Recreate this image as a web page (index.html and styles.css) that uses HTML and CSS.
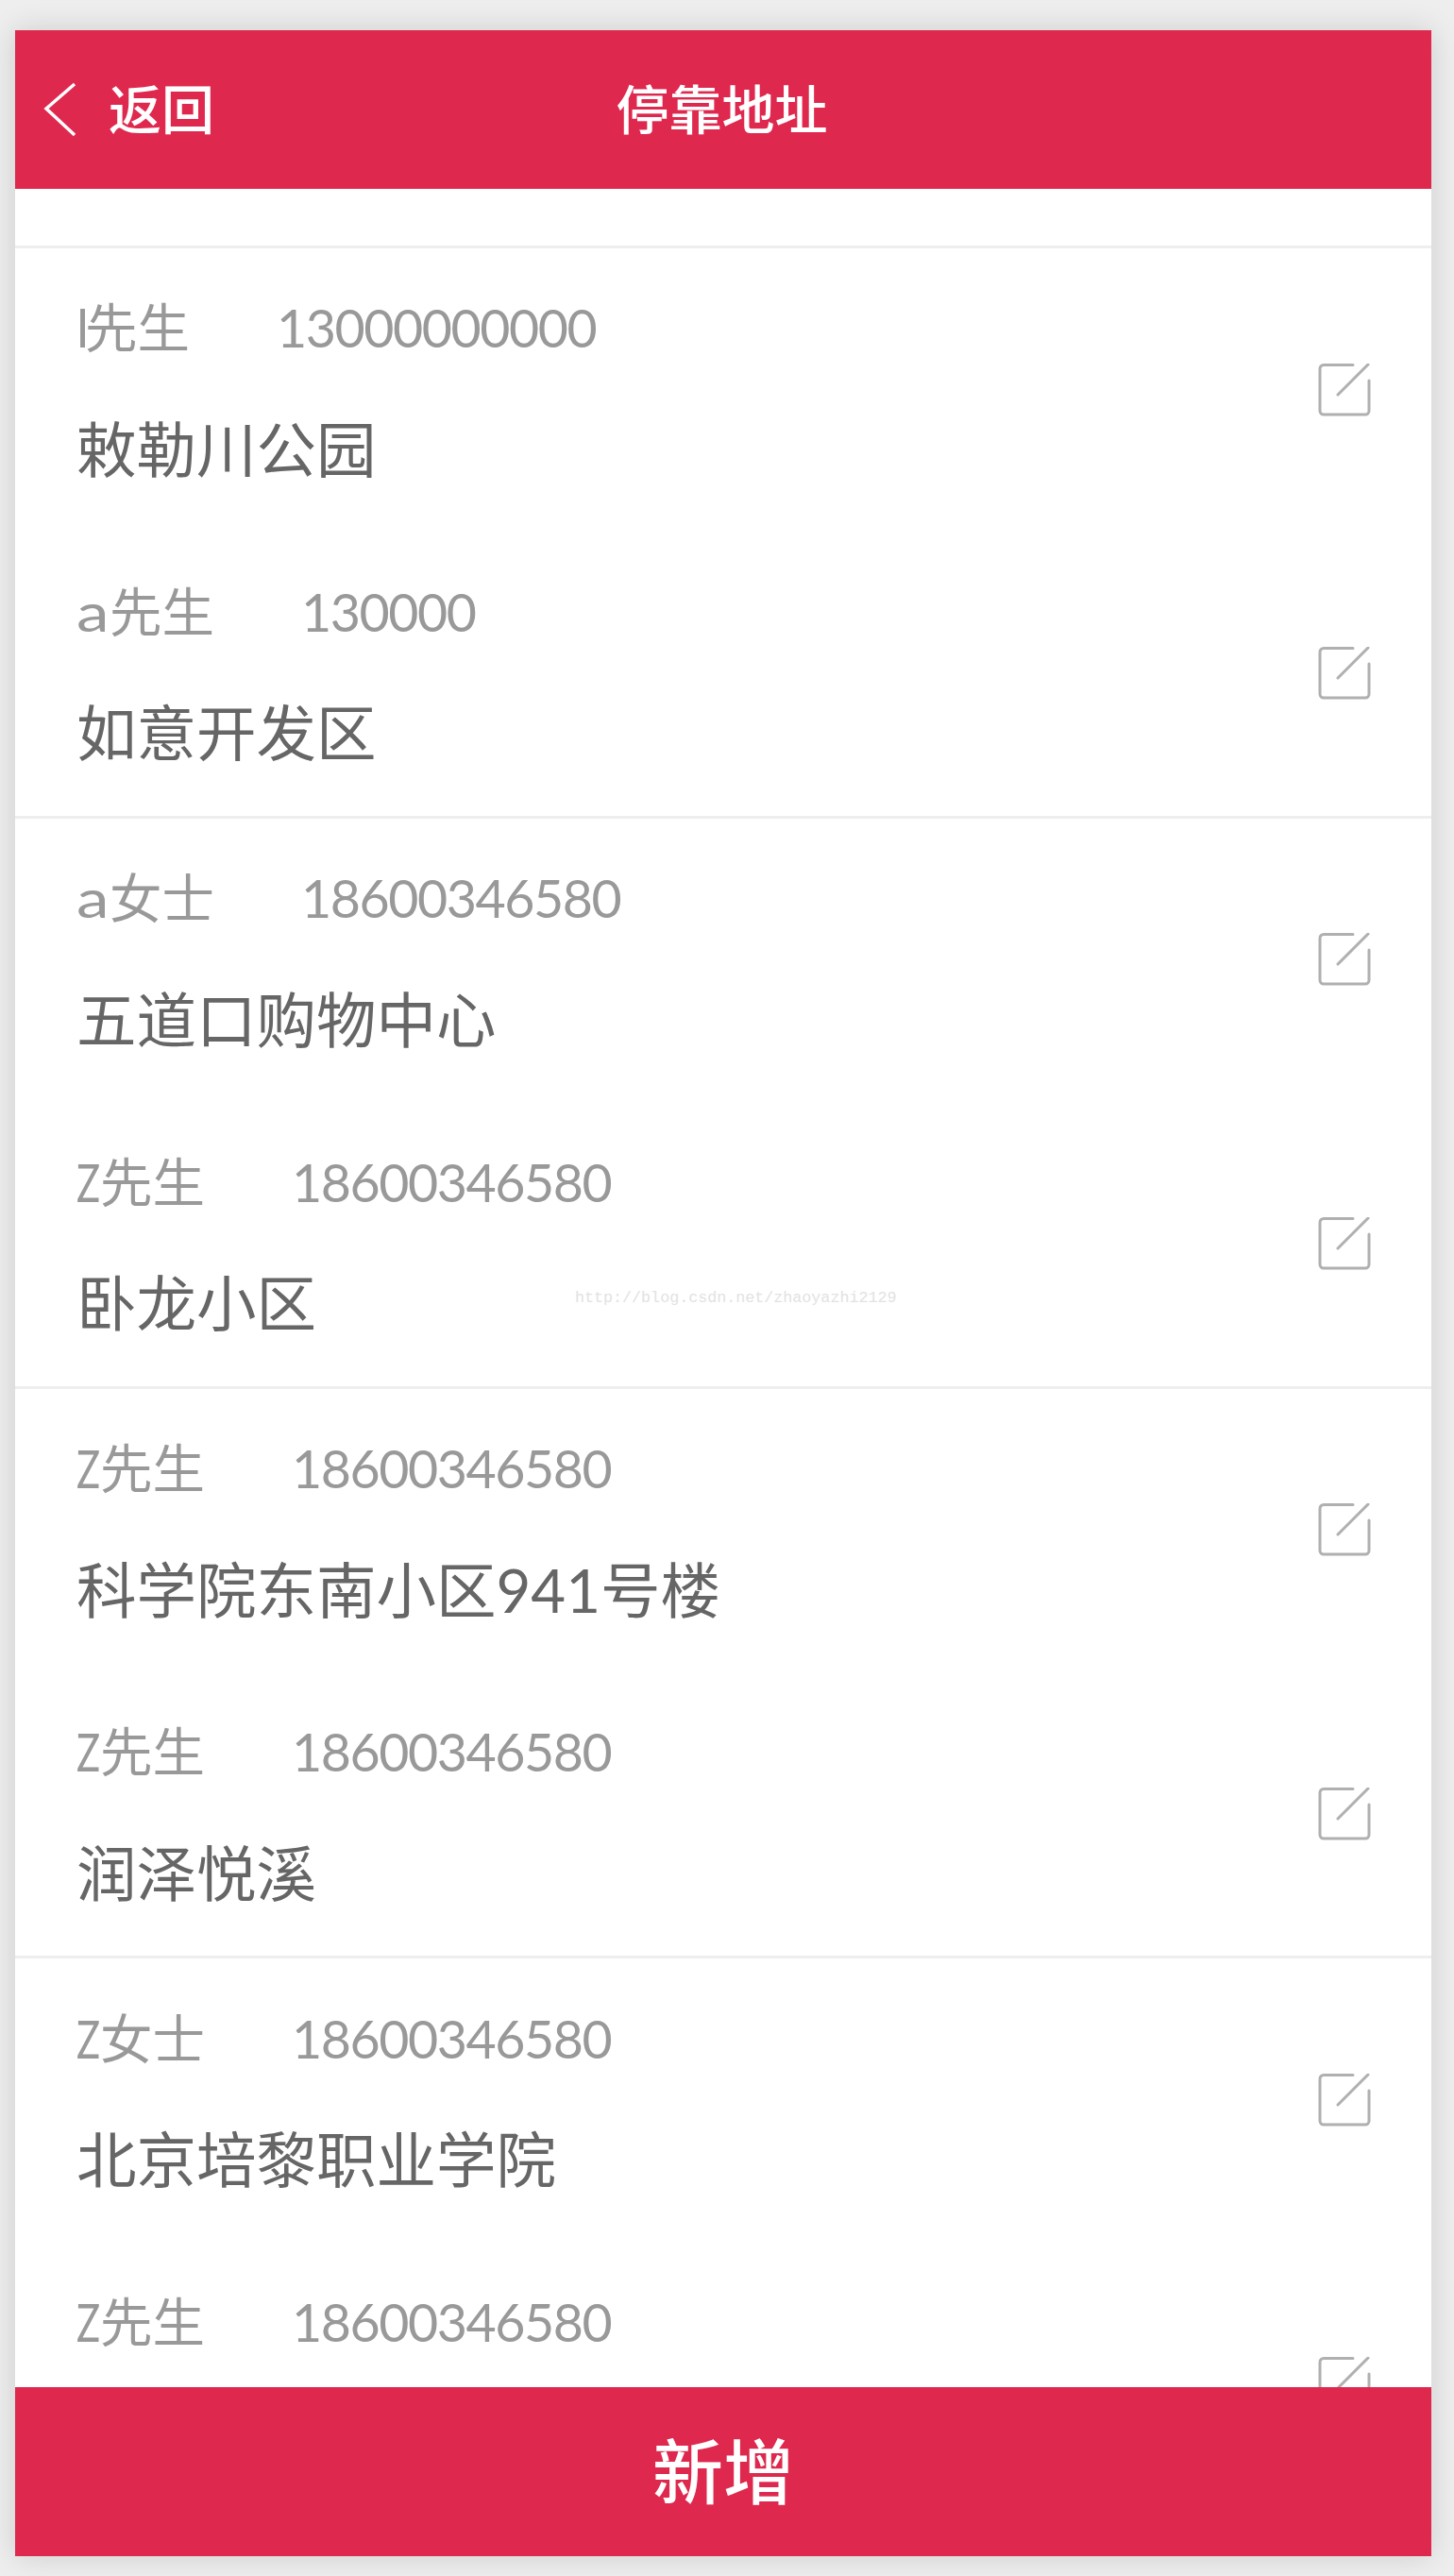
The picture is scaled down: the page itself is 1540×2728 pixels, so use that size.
FILE: index.html
```html
<!DOCTYPE html>
<html lang="zh-CN">
<head>
    <meta charset="UTF-8">
    <meta name="viewport" content="width=device-width, initial-scale=1.0">
    <title>停靠地址</title>
    <link rel="stylesheet" href="styles.css">
</head>
<body>
    <svg width="0" height="0" class="defs">
        <symbol id="edit" viewBox="0 0 56 56">
            <path d="M37 1.5H6A4 4 0 0 0 2 5.5V50A4 4 0 0 0 6 54H50A4 4 0 0 0 54 50V18" fill="none" stroke="currentColor" stroke-width="3" stroke-linecap="round"/>
            <path d="M21 33L53 1" fill="none" stroke="currentColor" stroke-width="3" stroke-linecap="round"/>
        </symbol>
    </svg>
    <div class="container">
        <header class="top">
            <a class="back">
                <svg width="36" height="58" viewBox="0 0 36 58"><path d="M33 2L3 28L33 56" fill="none" stroke="#fff" stroke-width="3.5"/></svg>
                <span>返回</span>
            </a>
            <h1>停靠地址</h1>
        </header>

        <div class="list">
            <section class="group">
                <div class="row">
                    <div class="info">
                        <p class="person"><span class="name"><i class="thin">l</i>先生</span><span class="phone">13000000000</span></p>
                        <p class="addr">敕勒川公园</p>
                    </div>
                    <svg class="edit"><use href="#edit"/></svg>
                </div>
                <div class="row">
                    <div class="info">
                        <p class="person"><span class="name"><i class="wide">a</i>先生</span><span class="phone">130000</span></p>
                        <p class="addr">如意开发区</p>
                    </div>
                    <svg class="edit"><use href="#edit"/></svg>
                </div>
            </section>
            <section class="group">
                <div class="row">
                    <div class="info">
                        <p class="person"><span class="name"><i class="wide">a</i>女士</span><span class="phone">18600346580</span></p>
                        <p class="addr">五道口购物中心</p>
                    </div>
                    <svg class="edit"><use href="#edit"/></svg>
                </div>
                <div class="row">
                    <div class="info">
                        <p class="person"><span class="name"><i class="narrow">Z</i>先生</span><span class="phone">18600346580</span></p>
                        <p class="addr">卧龙小区</p>
                    </div>
                    <svg class="edit"><use href="#edit"/></svg>
                </div>
            </section>
            <section class="group">
                <div class="row">
                    <div class="info">
                        <p class="person"><span class="name"><i class="narrow">Z</i>先生</span><span class="phone">18600346580</span></p>
                        <p class="addr">科学院东南小区941号楼</p>
                    </div>
                    <svg class="edit"><use href="#edit"/></svg>
                </div>
                <div class="row">
                    <div class="info">
                        <p class="person"><span class="name"><i class="narrow">Z</i>先生</span><span class="phone">18600346580</span></p>
                        <p class="addr">润泽悦溪</p>
                    </div>
                    <svg class="edit"><use href="#edit"/></svg>
                </div>
            </section>
            <section class="group">
                <div class="row">
                    <div class="info">
                        <p class="person"><span class="name"><i class="narrow">Z</i>女士</span><span class="phone">18600346580</span></p>
                        <p class="addr">北京培黎职业学院</p>
                    </div>
                    <svg class="edit"><use href="#edit"/></svg>
                </div>
                <div class="row">
                    <div class="info">
                        <p class="person"><span class="name"><i class="narrow">Z</i>先生</span><span class="phone">18600346580</span></p>
                        <p class="addr"></p>
                    </div>
                    <svg class="edit"><use href="#edit"/></svg>
                </div>
            </section>
            <div class="watermark">http://blog.csdn.net/zhaoyazhi2129</div>
        </div>

        <button type="button" class="add">新增</button>
    </div>
</body>
</html>
```

FILE: styles.css
```css
html, body {
    height: 100%;
}
body {
    margin: 0;
    background-color: #eeeeee;
    overflow: hidden;
    font-family: Lato, "Noto Sans CJK SC", sans-serif;
}
.defs {
    position: absolute;
}
.container {
    display: flex;
    flex-direction: column;
    box-sizing: border-box;
    height: 2675px;
    margin: 32px 24px 0 16px;
    background-color: #fff;
    box-shadow: 0 0 30px rgba(0, 0, 0, 0.14);
}
.top {
    flex: 0 0 168px;
    display: grid;
    grid-template-columns: 1fr auto 1fr;
    align-items: center;
    background-color: #df284e;
    color: #fff;
}
.back {
    display: flex;
    align-items: center;
    padding-left: 30px;
    font-size: 56px;
    font-weight: 500;
    line-height: 80px;
}
.back span {
    margin-left: 33px;
}
h1 {
    grid-column: 2;
    margin: 0 3px 0 0;
    font-size: 56px;
    font-weight: 500;
    line-height: 80px;
}
.list {
    position: relative;
    flex: 1;
    min-height: 0;
    overflow: hidden;
    padding-top: 60px;
}
.group {
    border-top: 3px solid #eeeeee;
}
.row {
    display: flex;
    align-items: center;
    justify-content: space-between;
    height: 300.4px;
    box-sizing: border-box;
    padding: 0 64px 0 65px;
}
.info {
    margin-top: -3px;
}
.info p {
    margin: 0;
}
.person {
    display: flex;
    color: #999;
    font-size: 55.5px;
    line-height: 80px;
}
.name {
    margin-right: 92px;
}
.name i {
    display: inline-block;
    font-style: normal;
    transform-origin: left center;
}
.thin {
    width: 9px;
}
.wide {
    width: 35px;
    transform: scaleX(1.25);
}
.narrow {
    width: 25px;
    transform: scaleX(0.75);
}
.phone {
    letter-spacing: -1.45px;
}
.info .addr {
    min-height: 80px;
    margin-top: 48.5px;
    color: #666;
    font-size: 63.5px;
    line-height: 80px;
}
.edit {
    width: 56px;
    height: 56px;
    margin-top: -1px;
    color: #b0b0b0;
}
.watermark {
    position: absolute;
    left: 593px;
    top: 1163px;
    color: #e2e2e2;
    font-family: "Liberation Mono", monospace;
    font-size: 16.7px;
    line-height: 24px;
}
.add {
    flex: 0 0 179px;
    padding: 0 0 8px;
    border: none;
    background-color: #df284e;
    color: #fff;
    font-family: inherit;
    font-size: 75px;
    font-weight: 500;
    cursor: pointer;
}
```
